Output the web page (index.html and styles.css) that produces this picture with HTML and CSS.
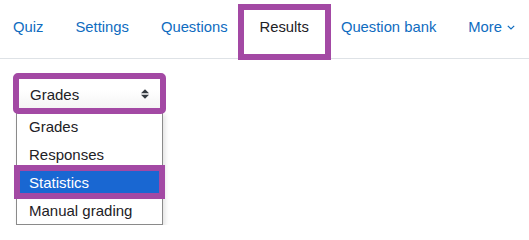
FILE: index.html
```html
<!DOCTYPE html>
<html lang="en">
<head>
<meta charset="utf-8">
<title>Results</title>
<link rel="stylesheet" href="styles.css">
</head>
<body>
<nav class="secnav">
  <ul class="tabs">
    <li><a class="tab" href="#">Quiz</a></li>
    <li><a class="tab" href="#">Settings</a></li>
    <li><a class="tab" href="#">Questions</a></li>
    <li><a class="tab tab-active" href="#">Results</a></li>
    <li><a class="tab" href="#">Question bank</a></li>
    <li><a class="tab tab-more" href="#">More<svg class="chev" width="8" height="5" viewBox="0 0 8 5"><path d="M0.8 0.8L4 4L7.2 0.8" fill="none" stroke="#0f6cbf" stroke-width="1.2"/></svg></a></li>
  </ul>
</nav>
<main class="content">
  <div class="picker">
    <div class="select">
      <span class="select-value">Grades</span>
      <svg class="caret" width="8" height="10" viewBox="0 0 8 10"><path d="M0 4.2L4 0.2L8 4.2Z M0 5.8L8 5.8L4 9.8Z" fill="#343a40"/></svg>
    </div>
    <ul class="options">
      <li class="option">Grades</li>
      <li class="option">Responses</li>
      <li class="option option-selected">Statistics</li>
      <li class="option">Manual grading</li>
    </ul>
  </div>
</main>
</body>
</html>
```
FILE: styles.css
```css
* { box-sizing: border-box; }
html, body { margin: 0; padding: 0; background: #fff; }
body {
  font-family: "Liberation Sans", Arial, sans-serif;
  font-size: 15px;
  color: #1d2125;
}
.secnav {
  border-bottom: 1px solid #dee2e6;
  padding: 10px 0 4px 0;
}
.tabs {
  list-style: none;
  margin: 0 0 0 -3px;
  padding: 0;
  display: flex;
}
.tab {
  display: flex;
  align-items: flex-start;
  height: 44px;
  padding: 6px 16px 0 16px;
  font-size: 14.8px;
  line-height: 22.5px;
  color: #0f6cbf;
  text-decoration: none;
  white-space: nowrap;
}
.tab-active {
  color: #1d2125;
  outline: 6px solid #a349a4;
}
.chev { margin-left: 5px; margin-top: 9px; }
.content { padding: 17px 0 0 16px; }
.picker { width: 147px; }
.select {
  height: 35px;
  border: 1px solid #a8c6ea;
  border-radius: 2px;
  background: linear-gradient(#ffffff 40%, #f3f3f3);
  display: flex;
  align-items: center;
  justify-content: space-between;
  padding: 0 13px 0 13px;
  outline: 6px solid #a349a4;
  outline-offset: -3px;
  position: relative;
  z-index: 2;
}
.select-value { line-height: 22px; padding-top: 2px; }
.caret { margin-top: 1px; }
.options {
  list-style: none;
  margin: 0;
  padding: 0;
  border: 1px solid #8a8a8a;
  background: #fff;
  box-shadow: 2px 3px 5px rgba(0,0,0,0.12);
}
.option {
  height: 28px;
  line-height: 26px;
  padding: 2px 0 0 12px;
  color: #1d2125;
  white-space: nowrap;
}
.option-selected {
  background: #1967d2;
  color: #fff;
  outline: 6px solid #a349a4;
  outline-offset: -3px;
}
```
